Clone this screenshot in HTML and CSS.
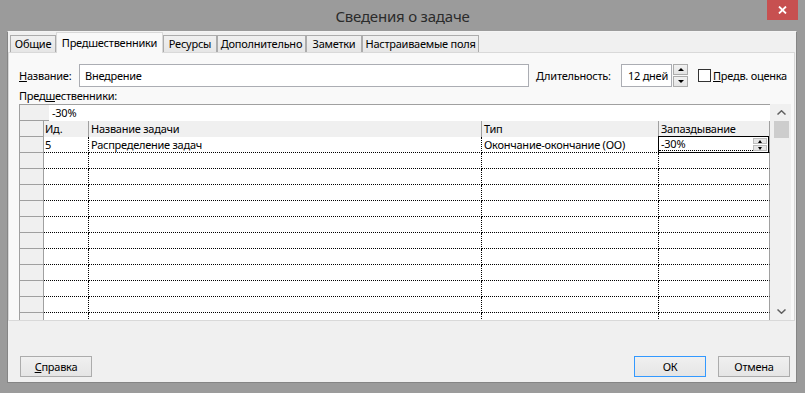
FILE: index.html
```html
<!doctype html>
<html lang="ru">
<head>
    <meta charset="UTF-8">
    <title>Сведения о задаче</title>
    <link rel="stylesheet" href="styles.css">
</head>
<body>
<div class="dialog">
    <div class="titlebar">
        <span class="title">Сведения о задаче</span>
        <a href="javascript:;" class="close">
            <svg width="9" height="8" viewBox="0 0 9 8"><path d="M1 0.5 L8 7.5 M8 0.5 L1 7.5" stroke="#fff" stroke-width="1.8"/></svg>
        </a>
    </div>
    <div class="client">
        <div class="tabs">
            <span class="tab t1">Общие</span>
            <span class="tab t2 on">Предшественники</span>
            <span class="tab t3">Ресурсы</span>
            <span class="tab t4">Дополнительно</span>
            <span class="tab t5">Заметки</span>
            <span class="tab t6">Настраиваемые поля</span>
        </div>
        <div class="panel">
            <div class="fields">
                <label class="lbl lbl-name"><u>Н</u>азвание:</label>
                <div class="input name">Внедрение</div>
                <label class="lbl lbl-dur"><u>Д</u>лительность:</label>
                <div class="input dur">12 дней</div>
                <div class="spin">
                    <span class="up"><i></i></span>
                    <span class="down"><i></i></span>
                </div>
                <span class="check"></span>
                <label class="lbl lbl-est"><u>П</u>редв. оценка</label>
            </div>
            <div class="caption">Пред<u>ш</u>ественники:</div>
            <div class="grid">
                <div class="table">
                    <div class="editrow"><span class="corner"></span><span class="editval">-30%</span></div>
                    <div class="row head">
                        <span class="rh"></span>
                        <span class="c id">Ид.</span>
                        <span class="c nm">Название задачи</span>
                        <span class="c tp">Тип</span>
                        <span class="c lg">Запаздывание</span>
                    </div>
                    <div class="row">
                        <span class="rh"></span>
                        <span class="c id">5</span>
                        <span class="c nm">Распределение задач</span>
                        <span class="c tp">Окончание-окончание (ОО)</span>
                        <span class="c lg">
                            <span class="editor">
                                <span class="editor-text">-30%</span>
                                <span class="mini-spin"><span class="up"><i></i></span><span class="down"><i></i></span></span>
                            </span>
                        </span>
                    </div>
                    <div class="row"><span class="rh"></span><span class="c id"></span><span class="c nm"></span><span class="c tp"></span><span class="c lg"></span></div>
                    <div class="row"><span class="rh"></span><span class="c id"></span><span class="c nm"></span><span class="c tp"></span><span class="c lg"></span></div>
                    <div class="row"><span class="rh"></span><span class="c id"></span><span class="c nm"></span><span class="c tp"></span><span class="c lg"></span></div>
                    <div class="row"><span class="rh"></span><span class="c id"></span><span class="c nm"></span><span class="c tp"></span><span class="c lg"></span></div>
                    <div class="row"><span class="rh"></span><span class="c id"></span><span class="c nm"></span><span class="c tp"></span><span class="c lg"></span></div>
                    <div class="row"><span class="rh"></span><span class="c id"></span><span class="c nm"></span><span class="c tp"></span><span class="c lg"></span></div>
                    <div class="row"><span class="rh"></span><span class="c id"></span><span class="c nm"></span><span class="c tp"></span><span class="c lg"></span></div>
                    <div class="row"><span class="rh"></span><span class="c id"></span><span class="c nm"></span><span class="c tp"></span><span class="c lg"></span></div>
                    <div class="row"><span class="rh"></span><span class="c id"></span><span class="c nm"></span><span class="c tp"></span><span class="c lg"></span></div>
                    <div class="row"><span class="rh"></span><span class="c id"></span><span class="c nm"></span><span class="c tp"></span><span class="c lg"></span></div>
                    <div class="row"><span class="rh"></span><span class="c id"></span><span class="c nm"></span><span class="c tp"></span><span class="c lg"></span></div>
                </div>
                <div class="scroll">
                    <span class="arr">
                        <svg width="9" height="5" viewBox="0 0 9 5"><path d="M0.5 4.5 L4.5 0.8 L8.5 4.5" fill="none" stroke="#606060" stroke-width="1.5"/></svg>
                    </span>
                    <span class="thumb"></span>
                    <span class="track"></span>
                    <span class="arr">
                        <svg width="9" height="5" viewBox="0 0 9 5"><path d="M0.5 0.5 L4.5 4.2 L8.5 0.5" fill="none" stroke="#606060" stroke-width="1.5"/></svg>
                    </span>
                </div>
            </div>
        </div>
        <div class="buttons">
            <button class="btn"><u>С</u>правка</button>
            <span class="spacer"></span>
            <button class="btn ok">ОК</button>
            <button class="btn">Отмена</button>
        </div>
    </div>
</div>
</body>
</html>
```

FILE: styles.css
```css
*{
    margin: 0;
    padding: 0;
    box-sizing: border-box;
}
body{
    width: 805px;
    height: 393px;
    overflow: hidden;
    background: #9b9b9b;
    font-family: "Noto Sans", sans-serif;
    font-size: 11px;
    letter-spacing: -0.25px;
    color: #000;
}
u{
    text-decoration: underline;
    text-underline-offset: 1px;
}
.dialog{
    position: relative;
    height: 393px;
}
.titlebar{
    height: 31px;
    display: flex;
    align-items: center;
    justify-content: center;
}
.title{
    font-size: 15px;
    letter-spacing: -0.2px;
    color: #2b2b2b;
    padding-top: 1px;
}
.close{
    position: absolute;
    top: 0;
    right: 7px;
    width: 31px;
    height: 20px;
    background: #c75050;
    display: flex;
    align-items: center;
    justify-content: center;
}
.client{
    margin-left: 7px;
    width: 790px;
    height: 352px;
    background: #f0f0f0;
    border: 1px solid #858585;
    border-top-color: #f4f4f4;
    display: flex;
    flex-direction: column;
}
/* вкладки */
.tabs{
    height: 20px;
    padding-left: 2px;
    display: flex;
    align-items: flex-end;
    position: relative;
    z-index: 2;
}
.tab{
    height: 17px;
    line-height: 15px;
    text-align: center;
    border: 1px solid #acacac;
    border-bottom: none;
    background: linear-gradient(#f0f0f0, #e6e6e6);
    white-space: nowrap;
}
.tab.on{
    height: 21px;
    line-height: 19px;
    margin-bottom: -1px;
    background: #f9f9f9;
    border-color: #d9d9d9;
}
.t1{ width: 46px; }
.t2{ width: 107px; }
.t3{ width: 54px; }
.t4{ width: 89px; }
.t5{ width: 56px; }
.t6{ width: 117px; }
.panel{
    height: 269px;
    margin-right: 1px;
    background: #f9f9f9;
    border: 1px solid #d9d9d9;
    padding: 11px 0 0 10px;
}
/* поля */
.fields{
    height: 23px;
    display: flex;
    align-items: center;
}
.lbl-name{ width: 60px; }
.lbl-dur{ width: 85px; margin-left: 7px; }
.lbl-est{ margin-left: 2px; }
.input{
    height: 23px;
    line-height: 21px;
    border: 1px solid #abadb3;
    background: #fff;
    padding-left: 5px;
    white-space: nowrap;
}
.input.name{ width: 450px; }
.input.dur{ width: 51px; padding-left: 6px; }
.spin{
    width: 15px;
    height: 23px;
    margin-left: 1px;
    display: flex;
    flex-direction: column;
    gap: 1px;
}
.spin span{
    flex: 1;
    border: 1px solid #acacac;
    background: linear-gradient(#f2f2f2, #e4e4e4);
    display: flex;
    align-items: center;
    justify-content: center;
}
.up i, .down i{
    width: 0;
    height: 0;
    border-left: 3px solid transparent;
    border-right: 3px solid transparent;
}
.up i{ border-bottom: 3px solid #000; }
.down i{ border-top: 3px solid #000; }
.check{
    width: 13px;
    height: 13px;
    margin-left: 10px;
    border: 1px solid #333;
    background: #fff;
}
.caption{
    height: 17px;
    line-height: 17px;
}
/* таблица */
.grid{
    height: 216px;
    display: flex;
}
.table{
    width: 751px;
    height: 216px;
    overflow: hidden;
    border-left: 1px solid #a0a0a0;
    border-top: 1px solid #a0a0a0;
    background: #fff;
}
.editrow{
    height: 16px;
    display: flex;
}
.corner{
    width: 29px;
    background: #f0f0f0;
    border-bottom: 1px solid #a0a0a0;
}
.editval{
    padding-left: 3px;
    line-height: 15px;
}
.row{
    height: 16px;
    display: grid;
    grid-template-columns: 24px 45px 393px 177px 111px;
}
.rh{
    background: #f0f0f0;
    border-right: 1px solid #a0a0a0;
    border-bottom: 1px solid #a0a0a0;
}
.c{
    line-height: 15px;
    padding-left: 2px;
    white-space: nowrap;
    border-bottom: 1px dotted #000;
    border-right: 1px dotted #000;
}
.c.id{ padding-left: 1px; }
.c.lg{
    position: relative;
    border-right: 1px solid #a0a0a0;
}
.head .c{
    background: #f0f0f0;
    border-bottom: none;
    border-right: 1px solid #a0a0a0;
}
.editor{
    position: absolute;
    top: -1px;
    left: -1px;
    right: 0;
    bottom: -1px;
    border: 1px solid #000;
    background: #fff;
    display: flex;
    align-items: stretch;
}
.editor-text{
    flex: 1;
    padding-left: 2px;
    line-height: 14px;
    border-bottom: 1px dotted #000;
    margin-bottom: 1px;
}
.mini-spin{
    width: 15px;
    display: flex;
    flex-direction: column;
    padding: 1px 1px 1px 0;
    gap: 1px;
}
.mini-spin span{
    flex: 1;
    background: #e6e6e6;
    border: 1px solid #bdbdbd;
    display: flex;
    align-items: center;
    justify-content: center;
}
.mini-spin i{
    border-left-width: 2px;
    border-right-width: 2px;
}
.scroll{
    width: 21px;
    display: flex;
    flex-direction: column;
    background: #f0f0f0;
}
.arr{
    height: 17px;
    display: flex;
    align-items: center;
    justify-content: center;
    padding-left: 2px;
}
.thumb{
    height: 17px;
    width: 15px;
    margin-left: 4px;
    background: #cdcdcd;
}
.track{
    flex: 1;
}
/* кнопки */
.buttons{
    margin-top: 35px;
    padding: 0 6px 0 12px;
    display: flex;
    gap: 12px;
}
.spacer{
    flex: 1;
}
.btn{
    width: 72px;
    height: 21px;
    font-family: inherit;
    font-size: 11px;
    letter-spacing: -0.25px;
    color: #000;
    border: 1px solid #acacac;
    background: linear-gradient(#f0f0f0, #e5e5e5);
}
.btn.ok{
    border-color: #3399ff;
}
```
